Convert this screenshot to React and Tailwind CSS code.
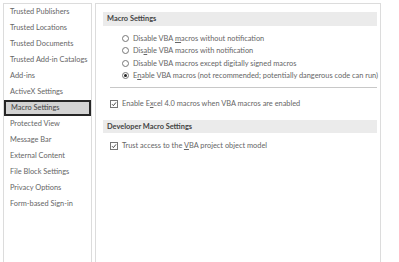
import React from "react";

const navItems = [
  "Trusted Publishers",
  "Trusted Locations",
  "Trusted Documents",
  "Trusted Add-in Catalogs",
  "Add-ins",
  "ActiveX Settings",
  "Macro Settings",
  "Protected View",
  "Message Bar",
  "External Content",
  "File Block Settings",
  "Privacy Options",
  "Form-based Sign-in",
];

const Radio = ({ checked }) => (
  <span className="w-[7px] h-[7px] rounded-full border border-[#777] bg-white flex items-center justify-center shrink-0">
    {checked && <span className="w-[3px] h-[3px] rounded-full bg-[#222]" />}
  </span>
);

const Check = () => (
  <span className="w-[8px] h-[8px] border border-[#777] bg-white flex items-center justify-center shrink-0">
    <svg width="6" height="6" viewBox="0 0 6 6">
      <path d="M1 3.2 L2.4 4.6 L5 1.4" fill="none" stroke="#333" strokeWidth="0.9" />
    </svg>
  </span>
);

const App = () => {
  return (
    <div
      className="w-[399px] h-[262px] bg-white flex pl-[3px] pt-[3px] text-[#666] overflow-hidden"
      style={{ fontFamily: 'Lato, "Noto Sans", sans-serif' }}
    >
      <div className="w-[89px] border-l border-t border-r border-[#dcdcdc] text-[7.4px] shrink-0">
        {navItems.map((item) => (
          <div
            key={item}
            className={
              item === "Macro Settings"
                ? "h-[16px] pl-[5px] flex items-center whitespace-nowrap bg-[#d3d3d3] border-2 border-[#262626] text-[#444]"
                : "h-[16px] pl-[6px] flex items-center whitespace-nowrap"
            }
          >
            {item}
          </div>
        ))}
      </div>
      <div className="w-[286px] ml-[3px] border-l border-t border-r border-[#dcdcdc] pl-[7px] pr-[3px] pt-[8px] text-[7.4px]">
        <div className="h-[14px] bg-[#ebebeb] flex items-center pl-[4px] font-bold text-[#444]">
          Macro Settings
        </div>
        <div className="pl-[19px] pt-[6px] flex flex-col">
          <div className="h-[12.5px] flex items-center gap-[4px]">
            <Radio />
            <span>
              Disable VBA <u>m</u>acros without notification
            </span>
          </div>
          <div className="h-[12.5px] flex items-center gap-[4px]">
            <Radio />
            <span>
              Dis<u>a</u>ble VBA macros with notification
            </span>
          </div>
          <div className="h-[12.5px] flex items-center gap-[4px]">
            <Radio />
            <span>Disable VBA macros except digitally signed macros</span>
          </div>
          <div className="h-[12.5px] flex items-center gap-[4px]">
            <Radio checked />
            <span className="whitespace-nowrap">
              E<u>n</u>able VBA macros (not recommended; potentially dangerous code can run)
            </span>
          </div>
        </div>
        <div className="ml-[7px] mt-[5px] border-t border-[#c8c8c8]" />
        <div className="pl-[7px] mt-[10px] h-[12px] flex items-center gap-[4px]">
          <Check />
          <span>
            Enable E<u>x</u>cel 4.0 macros when VBA macros are enabled
          </span>
        </div>
        <div className="mt-[10px] h-[13px] bg-[#ebebeb] flex items-center pl-[4px] font-bold text-[#444]">
          Developer Macro Settings
        </div>
        <div className="pl-[7px] mt-[7px] h-[12px] flex items-center gap-[4px]">
          <Check />
          <span>
            Trust access to the <u>V</u>BA project object model
          </span>
        </div>
      </div>
    </div>
  );
};

export default App;
